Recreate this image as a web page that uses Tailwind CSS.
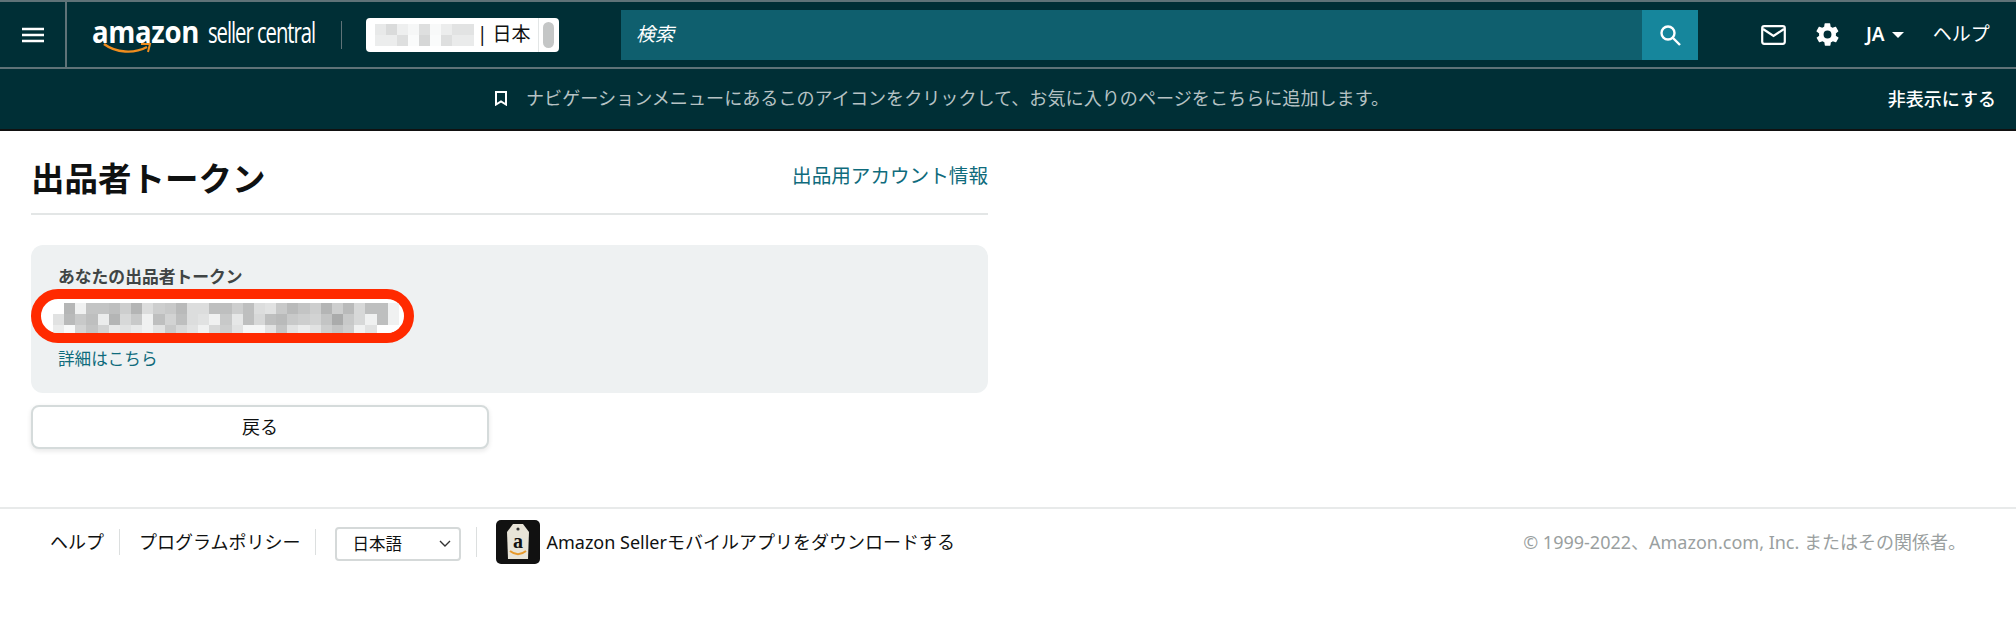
<!DOCTYPE html>
<html lang="ja">
<head>
    <meta charset="UTF-8">
    <title>出品者トークン</title>
    <script src="https://cdn.jsdelivr.net/npm/@tailwindcss/browser@4"></script>
</head>
<body class="bg-white font-['Noto_Sans','Noto_Sans_CJK_JP',sans-serif] text-[#0f1111]">
    <!-- Top nav -->
    <header class="h-[69px] bg-[#002f36] border-t-2 border-b-2 border-[#5f7378] flex items-center text-white">
        <div class="w-[67px] h-full border-r-2 border-[#5f7378] flex items-center justify-center">
            <svg width="22" height="16" viewBox="0 0 22 16" fill="none" stroke="white" stroke-width="2.4"><path d="M0 2h22M0 8h22M0 14h22"/></svg>
        </div>
        <div class="ml-[25px] w-[224px] relative -top-[3px]">
            <div class="flex items-baseline font-['Open_Sans',sans-serif] leading-none whitespace-nowrap">
                <span class="text-[31px] font-bold tracking-[-0.4px] origin-left scale-x-[0.89]">amazon</span><span class="-ml-[4px] text-[29px] tracking-[-1.5px] origin-left scale-x-[0.7]">seller central</span>
            </div>
            <svg class="absolute left-[11px] top-[27px]" width="50" height="12" viewBox="0 0 50 12" fill="none"><path d="M1 1c12 9 30 10 43 3" stroke="#f08d1e" stroke-width="2.4"/><path d="M38 1l9 0-2 8" stroke="#f08d1e" stroke-width="2"/></svg>
        </div>
        <div class="ml-[25px] w-px h-[28px] bg-[#5f7378]"></div>
        <div class="ml-[24px] w-[193px] h-[34px] bg-white rounded-[4px] flex items-center pl-[9px] pr-[5px] text-[#0f1111] text-[19px]">
            <div class="mosaic-store grid grid-cols-[repeat(9,11px)] grid-rows-[repeat(2,11px)] shrink-0"></div>
            <span class="ml-[3px] whitespace-nowrap">| 日本</span>
            <div class="ml-auto mr-[4px] w-px h-full bg-[#e3e6e6]"></div>
            <div class="w-[11px] h-[26px] rounded-full bg-[#c4c6c6]"></div>
        </div>
        <div class="ml-[62px] w-[1077px] h-[50px] bg-[#0f5f6e] flex">
            <div class="flex-1 flex items-center pl-[15px] text-[19px] italic text-white">検索</div>
            <div class="w-[56px] bg-[#16869c] flex items-center justify-center">
                <svg width="22" height="22" viewBox="0 0 22 22" fill="none" stroke="white" stroke-width="2.4"><circle cx="9" cy="9" r="6.5"/><path d="M14 14l7 7"/></svg>
            </div>
        </div>
        <div class="ml-[63px] flex items-center">
            <svg width="25" height="20" viewBox="0 0 25 20" fill="none" stroke="white" stroke-width="2.2"><rect x="1.2" y="1.2" width="22.6" height="17.6" rx="2"/><path d="M2 4l10.5 7L23 4"/></svg>
            <svg class="ml-[28px]" width="27" height="27" viewBox="0 0 24 24" fill="white"><path d="M19.4 13c.1-.3.1-.7.1-1s0-.7-.1-1l2.1-1.6c.2-.2.2-.4.1-.6l-2-3.5c-.1-.2-.4-.3-.6-.2l-2.5 1c-.5-.4-1.1-.7-1.7-1l-.4-2.6c0-.3-.2-.5-.5-.5h-4c-.3 0-.5.2-.5.4l-.4 2.7c-.6.2-1.2.6-1.7 1l-2.5-1c-.2-.1-.5 0-.6.2l-2 3.5c-.1.2 0 .5.1.6L4.6 11c0 .3-.1.7-.1 1s0 .7.1 1l-2.1 1.6c-.2.2-.2.4-.1.6l2 3.5c.1.2.4.3.6.2l2.5-1c.5.4 1.1.7 1.7 1l.4 2.7c0 .2.2.4.5.4h4c.3 0 .5-.2.5-.4l.4-2.7c.6-.2 1.2-.6 1.7-1l2.5 1c.2.1.5 0 .6-.2l2-3.5c.1-.2.1-.5-.1-.6L19.4 13zM12 15.5a3.5 3.5 0 1 1 0-7 3.5 3.5 0 0 1 0 7z"/></svg>
            <span class="ml-[25px] text-[19px] font-semibold">JA</span>
            <span class="ml-[7px] w-0 h-0 border-x-[6px] border-x-transparent border-t-[6px] border-t-white"></span>
            <span class="ml-[29px] text-[19px] whitespace-nowrap">ヘルプ</span>
        </div>
    </header>

    <!-- Favorites hint -->
    <div class="h-[62px] bg-[#002f36] border-b-2 border-[#111] flex items-center relative">
        <div class="ml-[495px] flex items-center">
            <svg width="12" height="15" viewBox="0 0 12 15" fill="none" stroke="white" stroke-width="2"><path d="M1 1h10v12.5l-5-3-5 3z"/></svg>
            <span class="ml-[19px] text-[18.1px] text-[#b6c2c4] whitespace-nowrap">ナビゲーションメニューにあるこのアイコンをクリックして、お気に入りのページをこちらに追加します。</span>
        </div>
        <span class="ml-auto mr-[20px] text-[18px] font-medium text-white whitespace-nowrap">非表示にする</span>
    </div>

    <!-- Main -->
    <main class="w-[957px] ml-[31px]">
        <div class="h-[84px] border-b-2 border-[#e3e6e6] flex justify-between">
            <h1 class="mt-[23px] text-[33.5px] leading-[48px] font-bold text-[#0f1111]">出品者トークン</h1>
            <a class="mt-[31px] text-[19.6px] leading-[28px] text-[#0f6b7c]">出品用アカウント情報</a>
        </div>
        <section class="mt-[30px] h-[148px] bg-[#eef1f2] rounded-[12px] pt-[19px]">
            <p class="ml-[27px] text-[16.8px] leading-[25px] font-bold text-[#404545]">あなたの出品者トークン</p>
            <div class="w-[383px] h-[54px] border-[10px] border-[#ff2a00] bg-white rounded-full pl-[12px] pt-[4px] overflow-hidden">
                <div class="mosaic-token grid grid-cols-[repeat(31,11.17px)] grid-rows-[11px_11px_8px]"></div>
            </div>
            <a class="block ml-[27px] mt-[4px] text-[16.6px] leading-[24px] text-[#0f6b7c]">詳細はこちら</a>
        </section>
        <button class="mt-[12px] w-[458px] h-[44px] bg-white border-2 border-[#d5dbdb] rounded-[8px] shadow-[0_2px_5px_rgba(15,17,17,0.1)] text-[18px] text-[#0f1111]">戻る</button>
    </main>

    <!-- Footer -->
    <footer class="mt-[58px] border-t-2 border-[#e8eaea] h-[68px] flex items-center pl-[50px] pr-[50px] text-[18px]">
        <a>ヘルプ</a>
        <div class="ml-[15px] mr-[19px] w-px h-[26px] bg-[#dcdfdf]"></div>
        <a class="whitespace-nowrap">プログラムポリシー</a>
        <div class="ml-[15px] mr-[19px] w-px h-[26px] bg-[#dcdfdf]"></div>
        <div class="w-[126px] h-[34px] border-2 border-[#d5d9d9] rounded-[4px] flex items-center justify-between pl-[15px] pr-[8px] relative top-[2px]">
            <span class="text-[16.5px]">日本語</span>
            <svg width="12" height="8" viewBox="0 0 12 8" fill="none" stroke="#333" stroke-width="1.4"><path d="M1 1l5 5 5-5"/></svg>
        </div>
        <div class="ml-[15px] mr-[19px] w-px h-[30px] bg-[#dcdfdf]"></div>
        <div class="w-[44px] h-[44px] shrink-0 rounded-[5px] bg-[#111] flex items-center justify-center">
            <svg width="28" height="40" viewBox="0 0 28 40">
                <path d="M9 2l10 0 6 8 -1 27-20 0-1-27z" fill="#e8e4d8"/>
                <circle cx="14" cy="7" r="1.6" fill="#333"/>
                <text x="14" y="26" text-anchor="middle" font-family="Liberation Serif, serif" font-weight="700" font-size="20" fill="#111">a</text>
                <path d="M6 29c5 4 11 4 16 0" fill="none" stroke="#e89a2c" stroke-width="2"/>
            </svg>
        </div>
        <span class="ml-[6px] whitespace-nowrap">Amazon Sellerモバイルアプリをダウンロードする</span>
        <span class="ml-auto text-[18px] text-[#9a9f9f] whitespace-nowrap">© 1999-2022、Amazon.com, Inc. またはその関係者。</span>
    </footer>

    <script>
        // Blurred-out values, drawn as grey mosaic cells
        const tokenShades = [
            255,181,240,195,195,190,205,180,220,205,200,185,220,220,190,190,205,190,220,225,200,185,195,205,180,205,185,215,190,190,240,
            225,185,200,190,235,180,215,200,240,190,210,190,220,225,240,200,230,190,215,190,185,200,205,210,195,170,200,215,240,190,240,
            235,248,210,195,210,232,225,232,240,225,200,215,225,240,215,205,225,245,245,225,195,225,235,225,205,195,205,240,225,255,255
        ];
        const storeShades = [
            232,218,238,246,222,248,236,226,226,
            236,236,222,250,214,250,222,234,234
        ];
        function fillMosaic(selector, shades) {
            const box = document.querySelector(selector);
            shades.forEach(s => {
                const cell = document.createElement('div');
                cell.style.backgroundColor = `rgb(${s},${s + 1},${s + 1})`;
                box.appendChild(cell);
            });
        }
        fillMosaic('.mosaic-token', tokenShades);
        fillMosaic('.mosaic-store', storeShades);
    </script>
</body>
</html>
